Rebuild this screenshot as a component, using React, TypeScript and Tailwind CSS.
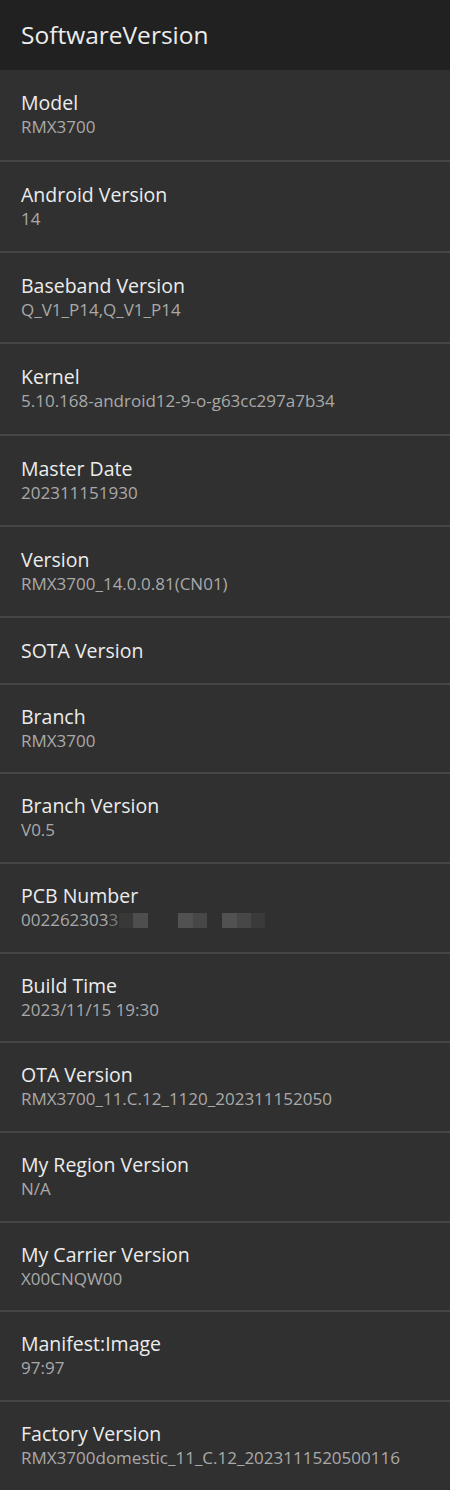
import React from "react";

type Item = { t: string; v?: string; h: string; pcb?: boolean };

const items: Item[] = [
  { t: "Model", v: "RMX3700", h: "h-[90px]" },
  { t: "Android Version", v: "14", h: "h-[89px]" },
  { t: "Baseband Version", v: "Q_V1_P14,Q_V1_P14", h: "h-[89px]" },
  { t: "Kernel", v: "5.10.168-android12-9-o-g63cc297a7b34", h: "h-[90px]" },
  { t: "Master Date", v: "202311151930", h: "h-[89px]" },
  { t: "Version", v: "RMX3700_14.0.0.81(CN01)", h: "h-[89px]" },
  { t: "SOTA Version", h: "h-[65px]" },
  { t: "Branch", v: "RMX3700", h: "h-[87px]" },
  { t: "Branch Version", v: "V0.5", h: "h-[88px]" },
  { t: "PCB Number", v: "002262303", h: "h-[88px]", pcb: true },
  { t: "Build Time", v: "2023/11/15 19:30", h: "h-[87px]" },
  { t: "OTA Version", v: "RMX3700_11.C.12_1120_202311152050", h: "h-[88px]" },
  { t: "My Region Version", v: "N/A", h: "h-[88px]" },
  { t: "My Carrier Version", v: "X00CNQW00", h: "h-[87px]" },
  { t: "Manifest:Image", v: "97:97", h: "h-[88px]" },
  { t: "Factory Version", v: "RMX3700domestic_11_C.12_2023111520500116", h: "h-[88px]" },
];

export default function App() {
  return (
    <div
      className="w-[450px] h-[1490px] bg-[#303030] overflow-hidden"
      style={{ fontFamily: "'Open Sans', Lato, sans-serif" }}
    >
      <div className="h-[70px] bg-[#212121] flex items-center pl-[21px]">
        <span className="text-[24.5px] text-[#ececec] leading-none">SoftwareVersion</span>
      </div>
      {items.map((it, i) => (
        <div
          key={i}
          className={`${it.h} flex flex-col justify-center pl-[21px] ${
            i < items.length - 1 ? "border-b-2 border-[#464646]" : ""
          } box-content`}
        >
          <div className="text-[19.5px] leading-[24px] text-[#ececec]">{it.t}</div>
          {it.v !== undefined && (
            <div className="text-[17px] leading-[24px] text-[#a9a9a9] flex items-center">
              <span>{it.v}</span>
              {it.pcb && (
                <span className="flex items-center">
                  <span className="text-[#7a7a7a]">3</span>
                  <span className="w-[1px]" />
                  <span className="w-[14px] h-[15px] bg-[#383838]" />
                  <span className="w-[15px] h-[15px] bg-[#4e4e4e]" />
                  <span className="w-[30px]" />
                  <span className="w-[15px] h-[15px] bg-[#515151]" />
                  <span className="w-[14px] h-[15px] bg-[#474747]" />
                  <span className="w-[15px]" />
                  <span className="w-[15px] h-[15px] bg-[#515151]" />
                  <span className="w-[14px] h-[15px] bg-[#474747]" />
                  <span className="w-[14px] h-[15px] bg-[#3a3a3a]" />
                </span>
              )}
            </div>
          )}
        </div>
      ))}
    </div>
  );
}
